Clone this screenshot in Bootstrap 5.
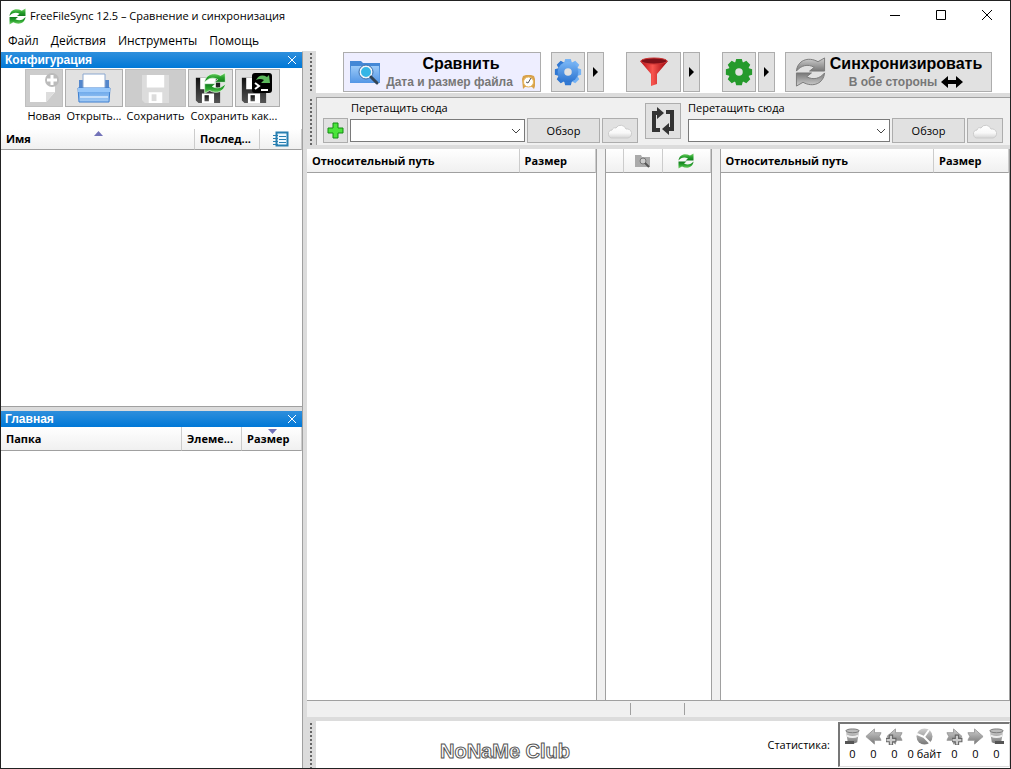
<!DOCTYPE html>
<html lang="ru">
<head>
<meta charset="utf-8">
<meta name="viewport" content="width=device-width, initial-scale=1">
<title>FreeFileSync 12.5 – Сравнение и синхронизация</title>
<link href="https://cdn.jsdelivr.net/npm/bootstrap@5.3.0/dist/css/bootstrap.min.css" rel="stylesheet">
<style>
:root{--line:#a0a0a0;--gutter:#dcdcdc;--face:#f0f0f0}
body{font:11px/16px "Open Sans","Noto Sans",sans-serif;color:#000;background:#fff;min-height:100vh;border:1px solid #222}
svg{display:block;flex:none}
.titlebar{height:30px;padding-left:8px}
.winbtn{width:46px;height:30px;border:0;background:none;padding:0}
.menubar{height:20px;font-size:12px;padding-left:1px}
.menubar a{color:#000;text-decoration:none;padding:0 6px}
.workspace{background:var(--gutter)}
.sidebar{width:302px;border-right:1px solid var(--line);border-top:1px solid #fff;gap:4px}
.pane{background:#fff}
.caption-bar{height:16px;background:linear-gradient(#2f8fdc,#0078d7);color:#fff;font:bold 12px/16px "Liberation Sans",sans-serif;padding:0 4px}
.caption-bar button{border:0;background:none;padding:0;width:11px}
.tool{background:#e1e1e1;border:1px solid #adadad;border-radius:0;padding:0;color:#000;display:flex;align-items:center;justify-content:center;font-size:11px;line-height:16px}
.tool:hover,.tool:disabled{background:#e1e1e1;border-color:#adadad;color:#000;opacity:1}
.tool:disabled{background:#ccc;border-color:#bfbfbf}
.w17{width:17px}.w34{width:34px}.w36{width:36px}.w38{width:38px}.w45{width:45px}.w58{width:58px}.w61{width:61px}.w73{width:73px}
.pairgap{gap:2px}
.cfgtools{padding:1px 0 0 24px;height:61px;gap:2px}
.cfgtools .tool{height:38px}
.cfgtools .lbl{height:20px;line-height:18px;white-space:nowrap;text-align:center}
.cfgspace{height:257px;border-bottom:1px solid var(--line)}
.listhead{width:100%;table-layout:fixed;border-collapse:separate;border-spacing:0;font-weight:bold}
.listhead th{height:21px;padding:0 5px;border-right:1px solid #ccc;border-bottom:1px solid var(--line);background:linear-gradient(#fff,#f0f0f0);white-space:nowrap;overflow:hidden;position:relative;line-height:16px}
.listhead.tall th{height:24px}
.listhead svg{margin:0 auto}
.listhead .sorter{position:absolute;top:2px;left:50%;margin-left:-4px}
.grip{width:9px;background:radial-gradient(circle,#666 0 1px,transparent 1px) 2px 5px/4px 4px repeat-y;flex:none}
.strip{height:42px;background:#fff;padding:0 18px 0 27px}
.strip .tool{height:40px}
.pushed{margin-left:12px}
.bigbtn b{font:bold 16px/20px "Liberation Sans",sans-serif}
.bigbtn small{font:bold 12px/16px "Liberation Sans",sans-serif;color:#777}
.compare,.compare:hover{width:198px;background:#eeeeff}
.syncbtn{width:207px}
.pairs{background:var(--face);border:1px solid var(--line);border-width:1px 0 0 1px;height:48px;padding:2px 7px 0 6px}
.pairs label{display:block;height:18px;white-space:nowrap}
.pairs .tool{height:25px;flex:none}
.pairs .swap{height:36px;margin:3px 7px 0}
.side{flex:1 1 0;min-width:0}
.pathbox{height:23px;border:1px solid #7a7a7a;border-radius:0;background-image:url("data:image/svg+xml,%3Csvg xmlns='http://www.w3.org/2000/svg' viewBox='0 0 10 10'%3E%3Cpath d='M1 3l4 4 4-4' fill='none' stroke='%23444'/%3E%3C/svg%3E");background-position:right 3px center;background-size:10px;padding:0 18px 0 4px;font-size:11px;line-height:16px;min-width:0;margin:1px 0}
.gridpane{background:#fff;border:1px solid var(--line);border-width:0 1px 0 0;min-width:0}
.midpane{width:107px;margin:0 8px}
.lined{border-left-width:1px}
.statusline{background:var(--face);border-top:1px solid var(--line);height:17px}
.statusline span{border-left:1px solid var(--line);height:12px;margin-top:2px}
.footer{height:47px}
.club{padding:12px 0 0 124px}
.clubmark{font:20px/24px "Liberation Sans",sans-serif;font-weight:bold;color:#fff;-webkit-text-stroke:1px #555}
.statbox{border:2px solid #777;border-right:1px solid #ddd;border-bottom:1px solid #ddd;height:45px;padding:4px 2px 0;text-align:center;line-height:18px}
.statbox div{width:21px}
.statbox .bytes{width:39px}
.statbox svg{margin:0 auto}
</style>
</head>
<body class="d-flex flex-column">
<svg width="0" height="0" class="position-absolute" aria-hidden="true">
<defs>
<linearGradient id="gGreen" x2="0" y2="1"><stop stop-color="#7ad46c"/><stop offset=".5" stop-color="#28a32d"/><stop offset="1" stop-color="#117a1d"/></linearGradient>
<linearGradient id="gGrey" x2="0" y2="1"><stop stop-color="#d0d0d0"/><stop offset="1" stop-color="#777"/></linearGradient>
<linearGradient id="gBlue" x2="0" y2="1"><stop stop-color="#78b5f5"/><stop offset="1" stop-color="#2c74d0"/></linearGradient>
<linearGradient id="gPale" x2="0" y2="1"><stop stop-color="#5c9ee8"/><stop offset="1" stop-color="#a4cbf4"/></linearGradient>
<linearGradient id="gFolder" x2="0" y2="1"><stop stop-color="#9bcaf8"/><stop offset="1" stop-color="#5396e6"/></linearGradient>
<linearGradient id="gRed" x2="1"><stop stop-color="#b00812"/><stop offset=".45" stop-color="#f8554e"/><stop offset="1" stop-color="#98000a"/></linearGradient>
<linearGradient id="gDark" x2="0" y2="1"><stop stop-color="#111"/><stop offset="1" stop-color="#555"/></linearGradient>
<linearGradient id="gCloud" x2="0" y2="1"><stop stop-color="#fff"/><stop offset=".6" stop-color="#f8f8f8"/><stop offset="1" stop-color="#d4d4d4"/></linearGradient>
<symbol id="sync" viewBox="0 0 32 32"><g id="arc"><path d="M1 15C2 4 13-1 24 5L31 1V15H15L20 11C13 7 6 9 1 15Z"/></g><use href="#arc" transform="rotate(180 16 16)"/></symbol>
<symbol id="gear" viewBox="0 0 32 32"><path id="tooth" d="M13 2h6l2 7H11zM11 23h10l-2 7h-6z"/><use href="#tooth" transform="rotate(45 16 16)"/><use href="#tooth" transform="rotate(90 16 16)"/><use href="#tooth" transform="rotate(135 16 16)"/><circle cx="16" cy="16" r="11"/><circle cx="16" cy="16" r="4" fill="#e1e1e1"/></symbol>
<symbol id="cloud" viewBox="0 0 24 16"><path d="M5 15a4 4 0 0 1-1-8 3 3 0 0 1 4-2A5.500 5.500 0 0 1 18 6a4.500 4.500 0 0 1 2 9z"/></symbol>
<symbol id="disk" viewBox="0 0 30 32"><path d="M1 2h28v29H4l-3-3z"/><path fill="#fff" d="M6 2h18v13H6zM8 20h14v11H8z"/><path d="M11 22h5v7h-5z"/></symbol>
<symbol id="bin" viewBox="0 0 18 18"><path d="M2 3l2 12q5 3 10 0l2-12z"/><ellipse cx="9" cy="3" rx="7" ry="2" fill="#bbb" stroke="#777"/><path d="M3 8q6 3 12 0" fill="none" stroke="#eee" stroke-width="2"/></symbol>
<symbol id="leftarrow" viewBox="0 0 18 18"><path d="M1 9L10 1v4h7l-2 4 2 4h-7v4z" stroke="#999"/></symbol>
<symbol id="plusmini" viewBox="0 0 10 10"><path d="M3 1h3v3h3v3H6v3H3V7H0V4h3z" fill="#ccc" stroke="#666"/></symbol>
</defs></svg>

<header>
<div class="titlebar d-flex align-items-center">
<svg width="17" height="17" class="me-1" fill="url(#gGreen)"><use href="#sync"/></svg><span class="flex-grow-1">FreeFileSync 12.5 – Сравнение и синхронизация</span>
<button class="winbtn" aria-label="Свернуть"><svg width="46" height="30" stroke="#000"><path d="M18 14.500h10"/></svg></button>
<button class="winbtn" aria-label="Развернуть"><svg width="46" height="30" stroke="#000" fill="none"><path d="M18.500 9.500h9v9h-9z"/></svg></button>
<button class="winbtn" aria-label="Закрыть"><svg width="46" height="30" stroke="#000"><path d="M18 9l10 10M28 9L18 19"/></svg></button>
</div>
<nav class="menubar d-flex align-items-center"><a href="#">Файл</a><a href="#">Действия</a><a href="#">Инструменты</a><a href="#">Помощь</a></nav>
</header>

<main class="workspace d-flex flex-grow-1">
<aside class="sidebar d-flex flex-column flex-shrink-0">
<section class="pane d-flex flex-column">
<div class="caption-bar d-flex justify-content-between"><span>Конфигурация</span><button aria-label="Закрыть панель"><svg width="10" height="10" stroke="#fff"><path d="M1 1l8 8M9 1L1 9"/></svg></button></div>
<div class="cfgtools d-flex">
<div><button class="tool btn w38" disabled aria-label="Новая"><svg width="32" height="34" viewBox="0 0 32 34"><path d="M2 4h25v17l-9 10H2z" fill="#fff"/><path d="M27 21H18v10z" fill="#ddd"/><circle cx="24" cy="9" r="7" fill="#bbb"/><path d="M24 4v10M19 9h10" stroke="#fff" stroke-width="3"/></svg></button><div class="lbl">Новая</div></div>
<div><button class="tool btn w58" aria-label="Открыть"><svg width="34" height="32" viewBox="0 0 34 32"><path d="M2 8h5v10H2zM27 8h5v10h-5z" fill="#5487cc"/><path d="M6 2h22v16H6z" fill="#fff" stroke="#8aa7cf"/><path d="M1 16h32l-1 14H2z" fill="url(#gPale)" stroke="#3d7fd0"/><path d="M1 16h32v4H1z" fill="#97c7fa"/><path d="M3 25h28" stroke="#c6dffa" stroke-width="2"/></svg></button><div class="lbl">Открыть...</div></div>
<div><button class="tool btn w61" disabled aria-label="Сохранить"><svg width="29" height="31" fill="#dcdcdc"><use href="#disk"/></svg></button><div class="lbl">Сохранить</div></div>
<div><div class="d-flex pairgap"><button class="tool btn w45" aria-label="Сохранить как синхронизацию"><svg width="34" height="34"><svg x="1" y="5" width="26" height="28" fill="url(#gDark)"><use href="#disk"/></svg><svg x="9" y="1" width="24" height="22" fill="url(#gGreen)" stroke="#efe"><use href="#sync"/></svg></svg></button><button class="tool btn w45" aria-label="Сохранить как пакетное задание"><svg width="34" height="34"><svg x="0" y="5" width="26" height="28" fill="url(#gDark)"><use href="#disk"/></svg><rect x="11" y="2" width="20" height="20" rx="3"/><path d="M15 9q4-7 11-3l2-2 1 8h-9l3-3q-4-2-8 0z" fill="#5cb95c"/><path d="M14 12l4 3-4 3M20 19h7" fill="none" stroke="#fff" stroke-width="2"/></svg></button></div><div class="lbl">Сохранить как...</div></div>
</div>
<table class="listhead"><colgroup><col><col style="width:65px"><col style="width:42px"></colgroup><thead><tr><th>Имя<svg class="sorter" width="9" height="5" fill="#7272b8"><path d="M0 5l4.500-5L9 5z"/></svg></th><th>Послед...</th><th aria-label="Журнал"><svg width="16" height="16" fill="none" stroke="#277eb0"><path d="M3.500 1.500h11v13h-11z" stroke-width="2" fill="#eef8ff"/><path d="M6 5.500h7M6 8.500h7M6 11.500h7M0 4.500h5M0 7.500h5M0 10.500h5M0 13.500h5"/></svg></th></tr></thead></table>
<div class="cfgspace"></div>
</section>
<section class="pane flex-grow-1">
<div class="caption-bar d-flex justify-content-between"><span>Главная</span><button aria-label="Закрыть панель"><svg width="10" height="10" stroke="#fff"><path d="M1 1l8 8M9 1L1 9"/></svg></button></div>
<table class="listhead tall"><colgroup><col><col style="width:60px"><col style="width:60px"></colgroup><thead><tr><th>Папка</th><th>Элеме...</th><th>Размер<svg class="sorter" width="9" height="5" fill="#7272b8"><path d="M0 0h9L4.500 5z"/></svg></th></tr></thead></table>
</section>
</aside>

<div class="flex-grow-1 d-flex flex-column ps-1" style="min-width:0">
<div class="d-flex"><div class="grip"></div>
<div class="strip flex-grow-1 d-flex align-items-center justify-content-between">
<button class="tool btn bigbtn compare"><svg width="34" height="32" viewBox="0 0 34 32"><path d="M2 5h11l2 2h17v20H2z" fill="#4488d6"/><path d="M3 10h28l1 17H2z" fill="url(#gFolder)"/><circle cx="18" cy="16" r="6" fill="#35b6e6" stroke="#f1f6fb" stroke-width="2"/><circle cx="18" cy="16" r="7" fill="none" stroke="#3a6ca8"/><path d="M23 21l6 6" stroke="#345" stroke-width="3" stroke-linecap="round"/></svg><span class="ms-1"><b class="d-block">Сравнить</b><small class="d-flex">Дата и размер файла<svg width="15" height="15" viewBox="0 0 15 15" class="ms-2"><path d="M1 5l1-3 3-1h5l3 1 1 3v7l-1 3-2-2H4l-2 2z" fill="#d8a14b"/><circle cx="7.500" cy="8" r="5" fill="#fff" stroke="#e8b85c"/><path d="M10 4L7 9 5 8" stroke="#555" fill="none"/></svg></small></span></button>
<div class="d-flex pairgap"><button class="tool btn w34" aria-label="Настройки сравнения"><svg width="30" height="30" fill="url(#gBlue)"><use href="#gear"/></svg></button><button class="tool btn w17" aria-label="Варианты сравнения"><svg width="6" height="10"><path d="M0 0l5 5-5 5z"/></svg></button></div>
<div class="d-flex pairgap pushed"><button class="tool btn" style="width:55px" aria-label="Фильтр"><svg width="30" height="30" viewBox="0 0 30 30"><path d="M1 4q14-5 28 0L18 17v10l-6 2V17z" fill="url(#gRed)"/><ellipse cx="15" cy="4" rx="13" ry="3" fill="#7d1018" stroke="#c33"/></svg></button><button class="tool btn w17" aria-label="Варианты фильтра"><svg width="6" height="10"><path d="M0 0l5 5-5 5z"/></svg></button></div>
<div class="d-flex pairgap pushed"><button class="tool btn w34" aria-label="Настройки синхронизации"><svg width="30" height="30" fill="#259a2c"><use href="#gear"/></svg></button><button class="tool btn w17" aria-label="Варианты синхронизации"><svg width="6" height="10"><path d="M0 0l5 5-5 5z"/></svg></button></div>
<button class="tool btn bigbtn syncbtn"><svg width="31" height="30" fill="url(#gGrey)" stroke="#777"><use href="#sync"/></svg><span class="ms-1"><b class="d-block">Синхронизировать</b><small class="d-flex justify-content-center">В обе стороны<svg width="22" height="12" class="ms-1 my-auto"><path d="M0 6l7-6v4h8V0l7 6-7 6V8H7v4z"/></svg></small></span></button>
</div></div>
<div class="d-flex mt-1"><div class="grip"></div>
<div class="pairs flex-grow-1 d-flex">
<div class="side"><label for="pathL" style="padding-left:28px">Перетащить сюда</label><div class="d-flex pairgap"><button class="tool btn" style="width:25px" aria-label="Добавить пару папок"><svg width="17" height="17"><path d="M6 1h5v5h5v5h-5v5H6v-5H1V6h5z" fill="#4be43b" stroke="#128b12"/></svg></button><select id="pathL" class="form-select pathbox"><option></option></select><button class="tool btn w73">Обзор</button><button class="tool btn w36" aria-label="Облако"><svg width="24" height="16" fill="url(#gCloud)" stroke="#ccc"><use href="#cloud"/></svg></button></div></div>
<button class="tool btn w36 swap" aria-label="Поменять стороны"><svg width="26" height="28" viewBox="0 0 26 28" fill="none" stroke="#333" stroke-width="4"><path d="M10 23H4V6h4M16 5h6v17h-4"/><path d="M7 0l7 6-7 6zM19 16l-7 6 7 6z" fill="#333" stroke="none"/></svg></button>
<div class="side"><label for="pathR">Перетащить сюда</label><div class="d-flex pairgap"><select id="pathR" class="form-select pathbox"><option></option></select><button class="tool btn w73">Обзор</button><button class="tool btn w36" aria-label="Облако"><svg width="24" height="16" fill="url(#gCloud)" stroke="#ccc"><use href="#cloud"/></svg></button></div></div>
</div></div>
<div class="flex-grow-1 d-flex mt-1" style="background:var(--face)">
<section class="gridpane side"><table class="listhead tall"><colgroup><col><col style="width:76px"></colgroup><thead><tr><th>Относительный путь</th><th>Размер</th></tr></thead></table></section>
<section class="gridpane midpane lined"><table class="listhead tall"><colgroup><col style="width:18px"><col style="width:39px"><col></colgroup><thead><tr><th></th><th aria-label="Категория"><svg width="17" height="15"><path d="M1 2h6l1 2h8v10H1z" fill="#aaa"/><circle cx="9" cy="8" r="3" fill="#ccc" stroke="#777"/><path d="M11 10l4 4" stroke="#555" stroke-width="2"/></svg></th><th aria-label="Действие"><svg width="16" height="16" fill="url(#gGreen)"><use href="#sync"/></svg></th></tr></thead></table></section>
<section class="gridpane side lined"><table class="listhead tall"><colgroup><col><col style="width:75px"></colgroup><thead><tr><th>Относительный путь</th><th>Размер</th></tr></thead></table></section>
</div>
<div class="statusline d-flex"><div style="flex:323 0 0"></div><span style="flex:54 0 0"></span><span style="flex:325 0 0"></span></div>
<div class="d-flex mt-1"><div class="grip"></div>
<div class="footer flex-grow-1 bg-white d-flex align-items-center">
<div class="club flex-grow-1"><span class="clubmark">NoNaMe Club</span></div><span class="me-2">Статистика:</span>
<div class="statbox d-flex">
<div><svg width="17" height="17" fill="url(#gGrey)"><use href="#bin"/><path d="M1 13h9v3H1z" fill="#555"/></svg>0</div>
<div><svg width="17" height="17" fill="url(#gGrey)"><use href="#leftarrow"/></svg>0</div>
<div><svg width="17" height="17" fill="url(#gGrey)"><use href="#leftarrow"/><svg y="6" width="11" height="11"><use href="#plusmini"/></svg></svg>0</div>
<div class="bytes"><svg width="17" height="17"><circle cx="8.500" cy="8.500" r="8" fill="url(#gGrey)"/><path d="M1 6l7 3 5-7M8 9l6 6" stroke="#fff" stroke-width="2" fill="none"/></svg><span class="text-nowrap">0 байт</span></div>
<div><svg width="17" height="17" fill="url(#gGrey)"><g transform="matrix(-1 0 0 1 17 0)"><use href="#leftarrow"/></g><svg x="6" y="6" width="11" height="11"><use href="#plusmini"/></svg></svg>0</div>
<div><svg width="17" height="17" fill="url(#gGrey)"><g transform="matrix(-1 0 0 1 17 0)"><use href="#leftarrow"/></g></svg>0</div>
<div><svg width="17" height="17" fill="url(#gGrey)"><use href="#bin"/><path d="M7 13h9v3H7z" fill="#555"/></svg>0</div>
</div></div></div>
</div>
</main>
<script src="https://cdn.jsdelivr.net/npm/bootstrap@5.3.0/dist/js/bootstrap.bundle.min.js"></script>
</body>
</html>
